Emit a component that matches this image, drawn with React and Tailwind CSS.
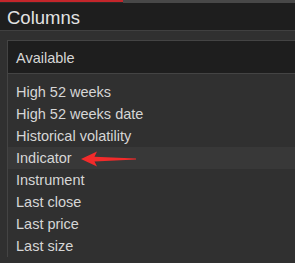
import React from "react";

const columns = [
    "High 52 weeks",
    "High 52 weeks date",
    "Historical volatility",
    "Indicator",
    "Instrument",
    "Last close",
    "Last price",
    "Last size",
];

function Arrow() {
    return (
        <svg width="56" height="20" viewBox="0 0 56 20" className="ml-[9px]">
            <path d="M0 10 L16 2.5 L13.5 7.8 L55 9.4 L55 10.4 L13.5 12.4 L16 17.5 Z" fill="#f22b2b" />
        </svg>
    );
}

export default function App() {
    return (
        <div className="w-[295px] h-[263px] overflow-hidden bg-[#303030] text-[#d6d6d6]" style={{ fontFamily: '"Liberation Sans", Arial, sans-serif' }}>
            <div className="flex h-[3px]">
                <div className="w-[123px] border-t-2 border-[#c4262b] bg-[#2a2a2a]" />
                <div className="flex-1 bg-[#484848]" />
            </div>
            <div className="h-[28px] bg-[#1e1e1e] border-b border-[#404040] pl-[7px] pt-[2px] flex items-center text-[18.5px] text-[#e2e2e2]">
                Columns
            </div>
            <div className="pt-[9px] pl-[7px]">
                <div className="border-l border-t border-[#444444]">
                    <div className="h-[33px] bg-[#1e1e1e] border-b border-[#444444] pl-[8px] pt-[3px] flex items-center text-[14.5px]">
                        Available
                    </div>
                    <div className="pt-[7px]">
                        {columns.map((name, index) =>
                            <div key={index} className={"h-[22px] pl-[8px] pt-[2px] flex items-center text-[14.5px] " + (name === "Indicator" ? "bg-[#383838]" : "")}>
                                <span>{name}</span>
                                {name === "Indicator" && <Arrow />}
                            </div>
                        )}
                    </div>
                </div>
            </div>
        </div>
    );
}
